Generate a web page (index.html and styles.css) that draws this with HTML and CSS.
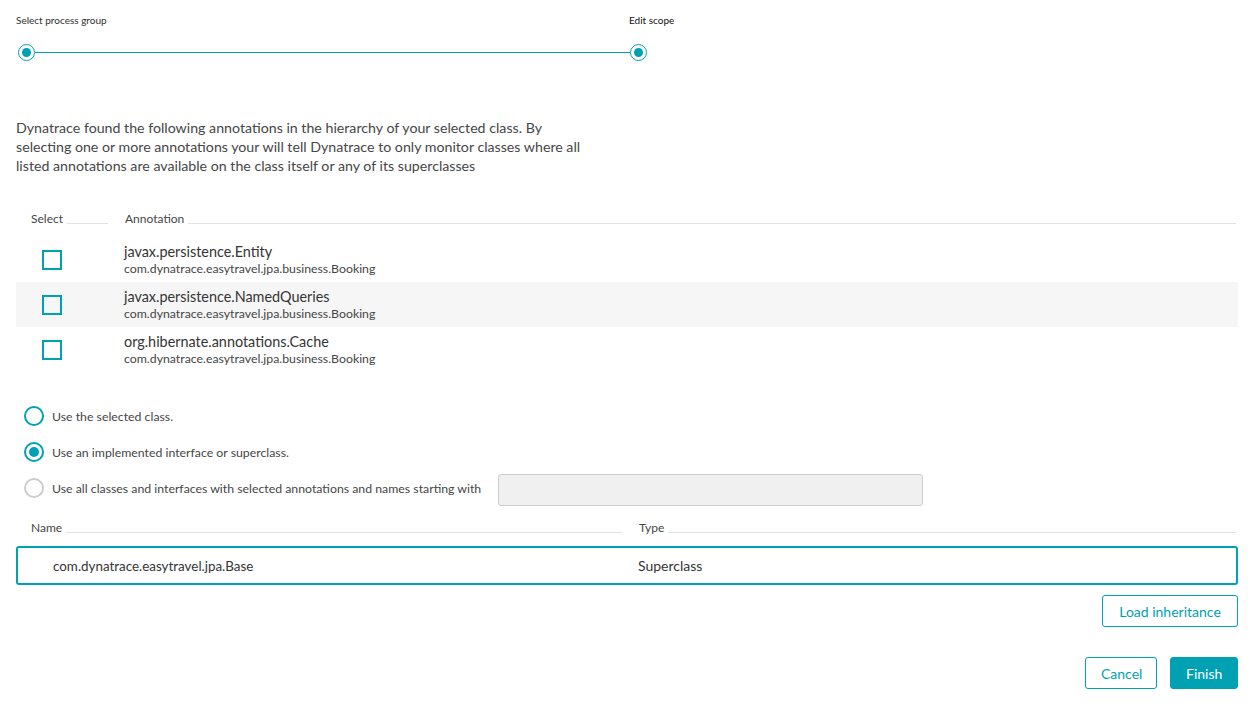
FILE: index.html
```html
<!DOCTYPE html>
<html lang="en">
<head>
<meta charset="utf-8">
<title>Edit scope</title>
<link rel="stylesheet" href="styles.css">
</head>
<body>
<div class="page">
  <div class="stepper">
    <div class="step-labels">
      <span class="step-label">Select process group</span>
      <span class="step-label active">Edit scope</span>
    </div>
    <div class="step-track">
      <span class="step-dot"></span>
      <span class="step-line"></span>
      <span class="step-dot"></span>
    </div>
  </div>

  <p class="intro">Dynatrace found the following annotations in the hierarchy of your selected class. By selecting one or more annotations your will tell Dynatrace to only monitor classes where all listed annotations are available on the class itself or any of its superclasses</p>

  <div class="ann-table">
    <div class="thead ann-cols">
      <div class="th"><span>Select</span><i></i></div>
      <div class="th"><span>Annotation</span><i></i></div>
    </div>
    <div class="ann-row ann-cols">
      <div class="cell-check"><span class="checkbox"></span></div>
      <div class="cell-ann"><div class="ann-name">javax.persistence.Entity</div><div class="ann-sub">com.dynatrace.easytravel.jpa.business.Booking</div></div>
    </div>
    <div class="ann-row ann-cols alt">
      <div class="cell-check"><span class="checkbox"></span></div>
      <div class="cell-ann"><div class="ann-name">javax.persistence.NamedQueries</div><div class="ann-sub">com.dynatrace.easytravel.jpa.business.Booking</div></div>
    </div>
    <div class="ann-row ann-cols">
      <div class="cell-check"><span class="checkbox"></span></div>
      <div class="cell-ann"><div class="ann-name">org.hibernate.annotations.Cache</div><div class="ann-sub">com.dynatrace.easytravel.jpa.business.Booking</div></div>
    </div>
  </div>

  <div class="radios">
    <label class="radio-row"><span class="radio"></span><span class="radio-text">Use the selected class.</span></label>
    <label class="radio-row"><span class="radio checked"></span><span class="radio-text">Use an implemented interface or superclass.</span></label>
    <label class="radio-row"><span class="radio disabled"></span><span class="radio-text">Use all classes and interfaces with selected annotations and names starting with</span><span class="text-input"></span></label>
  </div>

  <div class="type-table">
    <div class="thead type-cols">
      <div class="th"><span>Name</span><i></i></div>
      <div class="th"><span>Type</span><i></i></div>
    </div>
    <div class="type-row type-cols">
      <div class="type-name">com.dynatrace.easytravel.jpa.Base</div>
      <div class="type-type">Superclass</div>
    </div>
  </div>

  <div class="load-bar"><button class="btn btn-secondary load-btn">Load inheritance</button></div>

  <div class="footer">
    <button class="btn btn-secondary cancel-btn">Cancel</button>
    <button class="btn btn-primary finish-btn">Finish</button>
  </div>
</div>
</body>
</html>
```

FILE: styles.css
```css
* { box-sizing: border-box; }

html, body { margin: 0; padding: 0; background: #fff; }

body {
  font-family: "Lato", "Open Sans", sans-serif;
  color: #454646;
  font-size: 14px;
}

.page {
  padding: 12px 15px 0 16px;
  width: 1253px;
}

/* Stepper */
.stepper { width: 680px; }
.step-labels {
  display: grid;
  grid-template-columns: 613px auto;
  font-size: 10px;
  line-height: 16px;
  color: #2f2f2f;
}
.step-label.active { color: #111; }
.step-track {
  display: flex;
  align-items: center;
  margin-top: 16px;
  margin-left: 2px;
  width: 629px;
}
.step-dot {
  width: 17px;
  height: 17px;
  border-radius: 50%;
  border: 1.5px solid #00a1b2;
  position: relative;
  flex: none;
  background: #fff;
}
.step-dot::after {
  content: "";
  position: absolute;
  left: 2.5px; top: 2.5px;
  width: 9px; height: 9px;
  border-radius: 50%;
  background: #00a1b2;
}
.step-line {
  flex: 1;
  height: 1.5px;
  background: #00a1b2;
}

/* Intro */
.intro {
  margin: 57px 0 0 0;
  width: 580px;
  font-size: 14.2px;
  line-height: 19px;
}

/* Tables */
.thead {
  font-size: 12px;
  line-height: 16px;
  color: #454646;
}
.th {
  display: flex;
  align-items: flex-end;
  padding-left: 15px;
}
.th i {
  flex: 1;
  height: 1px;
  background: #e3e3e3;
  margin: 0 2px 3px 4px;
}

.ann-table { margin-top: 36px; }
.ann-cols {
  display: grid;
  grid-template-columns: 94px 1fr;
}
.ann-row { height: 45px; align-items: center; }
.ann-table .thead { margin-bottom: 10px; }
.ann-row.alt { background: #f6f6f6; }
.cell-check { padding-left: 26px; display: flex; align-items: center; }
.checkbox {
  width: 20px; height: 20px;
  border: 2px solid #00a1b2;
  display: block;
}
.cell-ann { padding-left: 14px; }
.ann-name { font-size: 14.4px; line-height: 18px; color: #353535; }
.ann-sub { font-size: 12.3px; line-height: 15px; color: #454646; }

/* Radios */
.radios {
  margin-top: 34px;
  display: flex;
  flex-direction: column;
  gap: 16px;
}
.radio-row {
  display: flex;
  align-items: center;
  height: 20px;
  font-size: 12.3px;
  margin-left: 8px;
}
.radio {
  width: 20px; height: 20px;
  border-radius: 50%;
  border: 2px solid #00a1b2;
  position: relative;
  flex: none;
  margin-right: 8px;
}
.radio.checked::after {
  content: "";
  position: absolute;
  left: 3px; top: 3px;
  width: 10px; height: 10px;
  border-radius: 50%;
  background: #00a1b2;
}
.radio.disabled { border-color: #cccccc; }
.text-input {
  display: block;
  width: 425px;
  height: 32px;
  margin-left: 17px;
  margin-top: 3px;
  border: 1px solid #cccccc;
  border-radius: 3px;
  background: #f0f0f0;
}

/* Type table */
.type-table { margin-top: 22px; }
.type-cols {
  display: grid;
  grid-template-columns: 608px 1fr;
}
.type-table .thead { margin-bottom: 10px; }
.type-row {
  height: 39px;
  border: 2px solid #00a1b2;
  border-radius: 3px;
  align-items: center;
  font-size: 14px;
  color: #353535;
}
.type-name { padding-left: 35px; font-size: 13.4px; }
.type-type { padding-left: 12px; }

/* Buttons */
.btn {
  font-family: inherit;
  font-size: 14px;
  height: 32px;
  border-radius: 3px;
  cursor: pointer;
  padding: 0 15px;
}
.btn-secondary {
  background: #fff;
  color: #00a1b2;
  border: 1px solid #00a1b2;
}
.btn-primary {
  background: #00a1b2;
  color: #fff;
  border: 1px solid #00a1b2;
}
.load-bar {
  display: flex;
  justify-content: flex-end;
  margin-top: 10px;
}
.load-btn { width: 136px; }
.footer {
  display: flex;
  justify-content: flex-end;
  gap: 13px;
  margin-top: 30px;
}
.cancel-btn { width: 72px; }
.finish-btn { width: 68px; }
```
